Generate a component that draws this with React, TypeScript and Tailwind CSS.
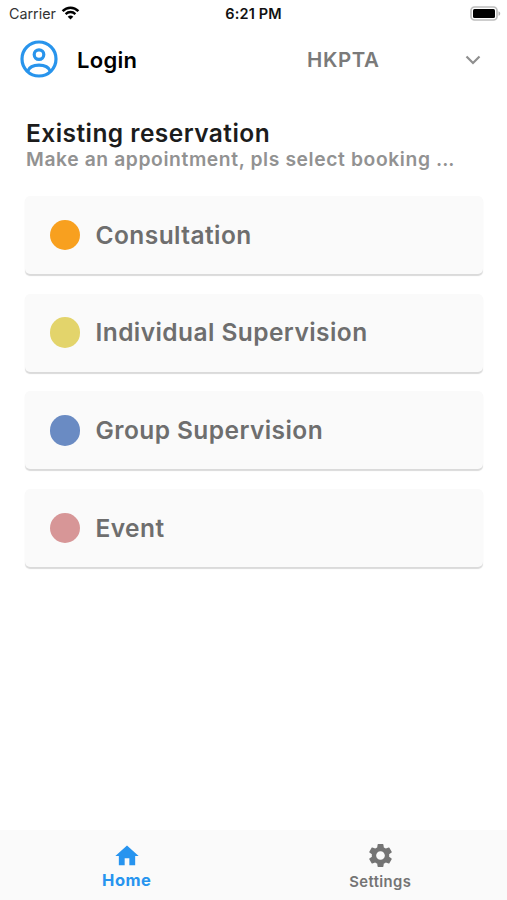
import { MdHome, MdSettings } from 'react-icons/md';

const bookingTypes = [
    { name: 'Consultation', color: 'bg-[#f8a01f]' },
    { name: 'Individual Supervision', color: 'bg-[#e3d46b]' },
    { name: 'Group Supervision', color: 'bg-[#6a8bc3]' },
    { name: 'Event', color: 'bg-[#d79697]' },
];

export default function App() {
    return (
        <div className="flex h-[900px] w-[507px] flex-col overflow-hidden bg-white font-['Inter',sans-serif]">
            <StatusBar />
            <Header />

            <main className="flex-1 pt-[27px] pr-6 pl-[25px]">
                <h1 className="pl-px text-[24.5px] leading-[29px] font-semibold tracking-[0.45px] text-[#1c1c1c]">
                    Existing reservation
                </h1>
                <p className="pl-px text-[19.3px] leading-[23px] font-semibold tracking-[0.6px] whitespace-nowrap text-[#929292]">
                    Make an appointment, pls select booking{' '}
                    <span className="tracking-normal">...</span>
                </p>

                <div className="mt-[25px] flex flex-col gap-[19.7px]">
                    {bookingTypes.map((type) => (
                        <BookingCard
                            key={type.name}
                            name={type.name}
                            color={type.color}
                        />
                    ))}
                </div>
            </main>

            <TabBar />
        </div>
    );
}

function StatusBar() {
    return (
        <div className="grid h-[27px] grid-cols-3 items-center pr-[6px] pl-[9px] text-[14.3px] text-[#111]">
            <div className="flex items-center gap-[5px]">
                <span className="text-[#333]">Carrier</span>
                <WifiIcon />
            </div>
            <span className="pr-[3px] text-center text-[14.5px] font-semibold tracking-[0.15px]">
                6:21 PM
            </span>
            <div className="flex justify-end">
                <BatteryIcon />
            </div>
        </div>
    );
}

function Header() {
    return (
        <header className="flex h-[65px] items-center pr-[26px] pl-5">
            <PersonIcon />
            <span className="ml-[19px] w-[230px] pt-[2px] text-[22px] font-semibold tracking-[0.3px] text-black">
                Login
            </span>
            <button
                type="button"
                className="flex flex-1 items-center justify-between"
            >
                <span className="pt-[2px] text-[20.5px] font-semibold tracking-[0.6px] text-[#7a7a7a]">
                    HKPTA
                </span>
                <ChevronIcon />
            </button>
        </header>
    );
}

function BookingCard({ name, color }: { name: string; color: string }) {
    return (
        <button
            type="button"
            className="flex h-[78px] items-center rounded-[5px] bg-[#fafafa] pl-[24.5px] shadow-[0_2px_1px_#dadada]"
        >
            <span className={`h-[30.5px] w-[30.5px] rounded-full ${color}`} />
            <span className="ml-[15.5px] text-[24.5px] font-semibold tracking-[0.43px] text-[#6e6e6e]">
                {name}
            </span>
        </button>
    );
}

function TabBar() {
    return (
        <nav className="grid h-[70px] grid-cols-2 bg-[#fafafa]">
            <a className="flex flex-col items-center pt-[12px] text-[#2794ef]">
                <MdHome className="h-7 w-7" />
                <span className="text-[16.5px] leading-[21px] font-bold tracking-[0.5px]">
                    Home
                </span>
            </a>
            <a className="flex flex-col items-center pt-[11px] text-[#747474]">
                <MdSettings className="h-[29px] w-[29px]" />
                <span className="text-[14.8px] leading-[24px] font-semibold tracking-[0.4px]">
                    Settings
                </span>
            </a>
        </nav>
    );
}

function WifiIcon() {
    return (
        <svg
            className="-mt-[2px]"
            width="19"
            height="14"
            viewBox="0 0 18 14"
            fill="none"
        >
            <path
                d="M1.1 5.1C5.6 0.5 12.4 0.5 16.9 5.1"
                stroke="#000"
                strokeWidth="2.5"
            />
            <path
                d="M4.1 8.1C6.9 5.3 11.1 5.3 13.9 8.1"
                stroke="#000"
                strokeWidth="2.3"
            />
            <path d="M9 13.6L6.2 10.7C7.8 9.2 10.2 9.2 11.8 10.7Z" fill="#000" />
        </svg>
    );
}

function BatteryIcon() {
    return (
        <svg
            className="-mt-px"
            width="31"
            height="15"
            viewBox="0 0 31 15"
            fill="none"
        >
            <rect
                x="1"
                y="1"
                width="26"
                height="13"
                rx="3.5"
                stroke="#bdbdbd"
                strokeWidth="1.7"
            />
            <rect x="3" y="3" width="22" height="9" rx="1.5" fill="#000" />
            <path d="M28.5 5.2C30.8 6 30.8 9 28.5 9.8Z" fill="#b2b2b2" />
        </svg>
    );
}

function PersonIcon() {
    return (
        <svg
            className="-mt-px"
            width="38"
            height="38"
            viewBox="0 0 38 38"
            fill="none"
            stroke="#2894ec"
            strokeWidth="3.2"
        >
            <circle cx="19" cy="19" r="17" />
            <circle cx="19" cy="14.6" r="4.8" />
            <path d="M7.8 31C9.5 26.8 13.5 25.2 19 25.2C24.5 25.2 28.5 26.8 30.2 31" />
        </svg>
    );
}

function ChevronIcon() {
    return (
        <svg width="16" height="10" viewBox="0 0 16 10" fill="none">
            <path
                d="M1.5 1.5L8 8L14.5 1.5"
                stroke="#8f8f8f"
                strokeWidth="2.2"
            />
        </svg>
    );
}
